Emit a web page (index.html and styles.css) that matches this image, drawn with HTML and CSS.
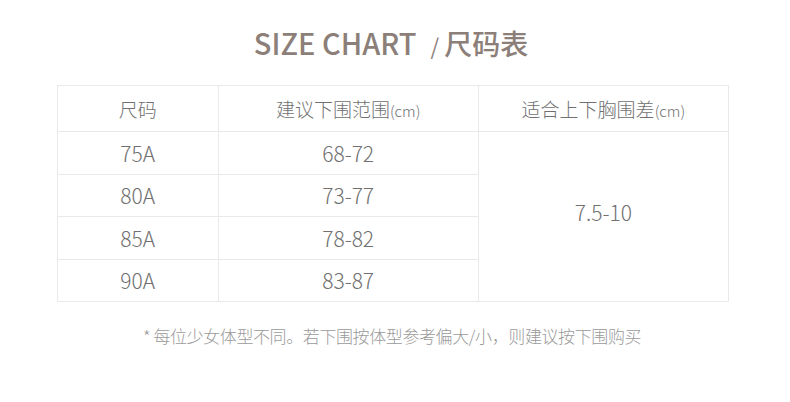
FILE: index.html
```html
<!DOCTYPE html>
<html lang="zh">
<head>
<meta charset="utf-8">
<link rel="stylesheet" href="styles.css">
</head>
<body>
<div class="page">
  <h1 class="title"><span class="en">SIZE CHART</span><span class="slash">/</span><span class="zh">尺码表</span></h1>
  <table class="chart">
    <thead>
      <tr>
        <th class="c1">尺码</th>
        <th class="c2">建议下围范围<small>(cm)</small></th>
        <th class="c3">适合上下胸围差<small>(cm)</small></th>
      </tr>
    </thead>
    <tbody>
      <tr><td>75A</td><td>68-72</td><td rowspan="4" class="diff">7.5-10</td></tr>
      <tr><td>80A</td><td>73-77</td></tr>
      <tr><td>85A</td><td>78-82</td></tr>
      <tr><td>90A</td><td>83-87</td></tr>
    </tbody>
  </table>
  <p class="note">* 每位少女体型不同。若下围按体型参考偏大/小，则建议按下围购买</p>
</div>
</body>
</html>
```

FILE: styles.css
```css
html, body {
  margin: 0;
  padding: 0;
  background: #fff;
}
body {
  font-family: "Noto Sans CJK SC", "Open Sans", sans-serif;
  width: 790px;
  height: 402px;
  overflow: hidden;
}
.page {
  display: flex;
  flex-direction: column;
  align-items: center;
  padding-top: 20px;
}
.title {
  margin: 0 8px 0 0;
  height: 44px;
  display: flex;
  align-items: baseline;
  color: #8c7f79;
  font-weight: 500;
  line-height: 44px;
  font-family: "Noto Sans CJK SC", sans-serif;
}
.title .en {
  font-size: 29px;
  letter-spacing: 0px;
}
.title .slash {
  font-size: 22px;
  font-weight: 400;
  margin-left: 14px;
  margin-right: 5px;
}
.title .zh {
  font-size: 28px;
}
.chart {
  margin-top: 21px;
  margin-right: 4px;
  border-collapse: collapse;
  width: 672px;
  color: #707070;
}
.chart th, .chart td {
  border: 1px solid #e9e9e9;
  text-align: center;
  font-weight: 300;
  padding: 0;
}
.chart th {
  height: 45px;
  font-size: 19px;
}
.chart th small {
  font-size: 15px;
}
.chart td {
  height: 41.5px;
  font-size: 21px;
  font-family: "Noto Sans CJK SC", sans-serif;
}
.chart td.diff {
  padding-bottom: 10px;
}
.chart .c1 { width: 160px; }
.chart .c2 { width: 260px; }
.chart .c3 { width: 250px; }
.note {
  margin: 21px 6px 0 0;
  font-size: 17px;
  font-weight: 300;
  color: #9a9a9a;
  letter-spacing: -0.4px;
}
```
